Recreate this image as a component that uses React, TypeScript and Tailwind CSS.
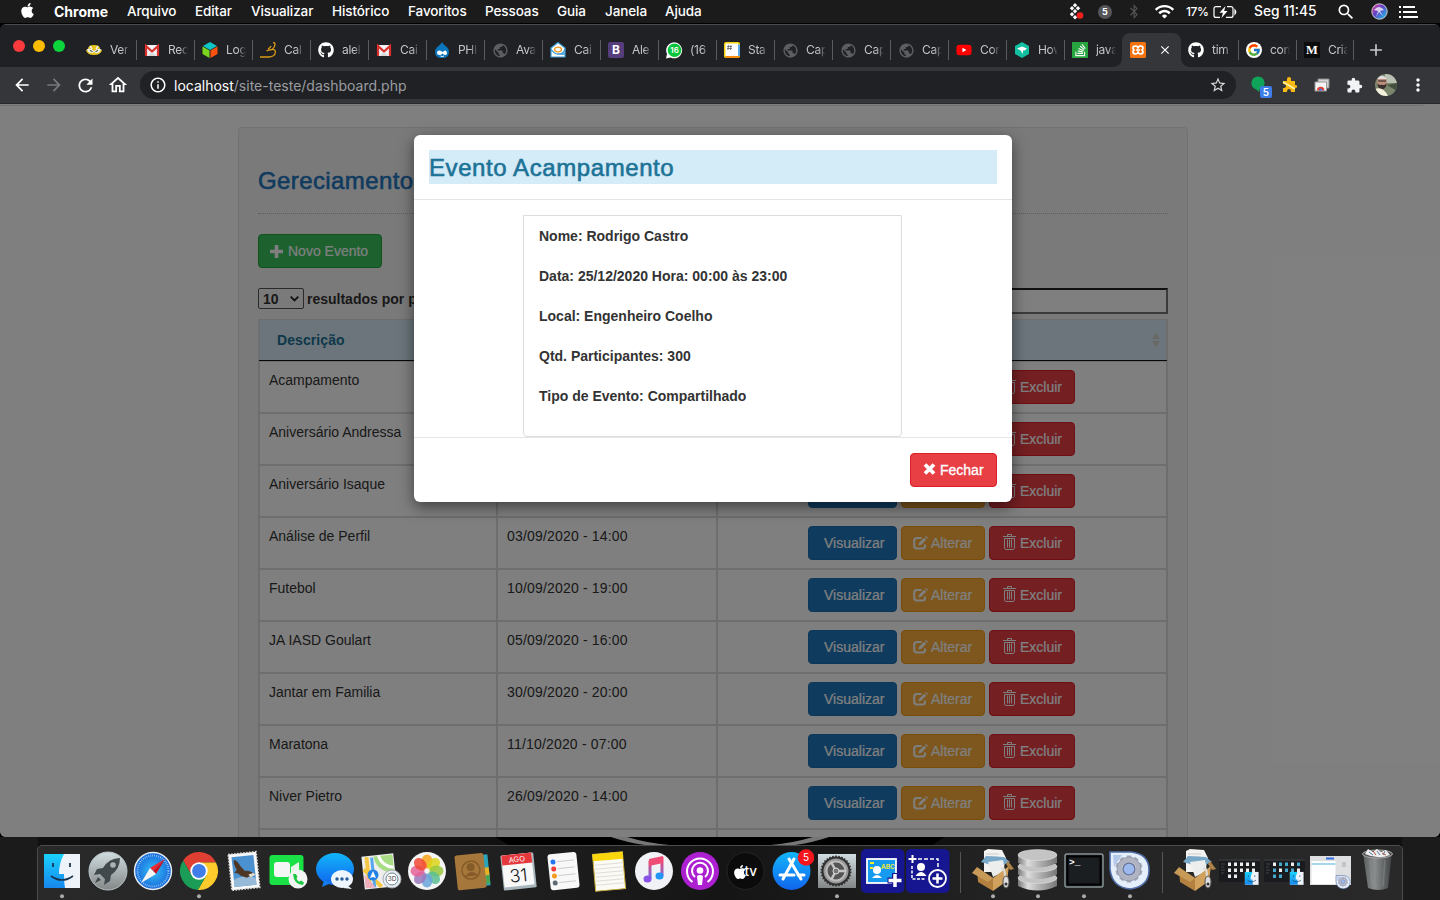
import React from "react";
import { FaApple, FaGithub, FaBluetoothB, FaYoutube, FaStackOverflow } from "react-icons/fa";
import { FcGoogle } from "react-icons/fc";
import {
  MdPublic, MdArrowBack, MdArrowForward, MdRefresh, MdOutlineHome, MdInfoOutline,
  MdStarBorder, MdExtension, MdMoreVert, MdWifi, MdAdd, MdClose, MdSearch,
} from "react-icons/md";

const ui = "font-['Inter',sans-serif]";

/* ---------- Menu bar ---------- */

const menus = [
  { label: "Arquivo", cls: "w-[68px]" },
  { label: "Editar", cls: "w-[56px]" },
  { label: "Visualizar", cls: "w-[81px]" },
  { label: "Histórico", cls: "w-[76px]" },
  { label: "Favoritos", cls: "w-[77px]" },
  { label: "Pessoas", cls: "w-[72px]" },
  { label: "Guia", cls: "w-[48px]" },
  { label: "Janela", cls: "w-[60px]" },
  { label: "Ajuda", cls: "w-[60px]" },
];

function MenuBar() {
  return (
    <div className={`flex h-[23px] shrink-0 items-center bg-[#1b1b1b] pl-5 text-[13.5px] font-medium text-white ${ui}`}>
      <FaApple className="mb-[2px] h-[17px] w-[15px]" />
      <span className="ml-[19px] w-[73px] text-[14px] font-bold">Chrome</span>
      {menus.map((m) => (
        <span key={m.label} className={`${m.cls} whitespace-nowrap tracking-[-0.1px]`}>{m.label}</span>
      ))}
      <div className="ml-auto flex items-center">
        <svg className="w-4" height="18" viewBox="0 0 16 18" fill="#fff">
          <path d="M6 0l2.200 2.200-2.200 2.200-2.200-2.200zM3 3l2.200 2.200L3 7.400.8 5.200zM9 3l2.200 2.200L9 7.400 6.800 5.200zM6 6l2.200 2.200L6 10.400 3.800 8.200zM3 9l2.200 2.200L3 13.400.8 11.200zM6 12l2.200 2.200L6 16.400 3.800 14.200z" />
          <circle cx="11" cy="12.5" r="3.3" fill="#f5201c" />
        </svg>
        <div className="ml-[13px] flex h-[14px] w-[14px] items-center justify-center rounded-full bg-[#55565a] text-[9px] font-bold">5</div>
        <FaBluetoothB className="ml-[15px] h-[15px] w-[14px] text-[#505050]" />
        <MdWifi className="ml-[13px] h-[21px] w-[21px]" />
        <span className="ml-[11px] w-[27px] whitespace-nowrap text-[12px] tracking-[-0.4px]">17%</span>
        <svg width="24" height="14" viewBox="0 0 24 14" fill="none" stroke="#fff" strokeWidth="1.2">
          <path d="M8 1.6H3a2 2 0 0 0-2 2v6.8a2 2 0 0 0 2 2h4M14 1.6h4a2 2 0 0 1 2 2v6.8a2 2 0 0 1-2 2h-5" />
          <path d="M12.500 1L6.500 7.800h3.400L8.500 13l6-7h-3.400z" fill="#fff" stroke="none" />
          <path d="M22 5q1.500 2 0 4z" fill="#fff" />
        </svg>
        <span className="ml-[17px] w-[64px] whitespace-nowrap text-[13.8px]">Seg 11:45</span>
        <MdSearch className="ml-[18px] h-[20px] w-[20px]" />
        <svg className="ml-[15px]" width="17" height="17" viewBox="0 0 17 17">
          <defs><linearGradient id="siri" x1="0" y1="0" x2="1" y2="1"><stop stopColor="#f43d98" /><stop offset=".45" stopColor="#5c45c9" /><stop offset="1" stopColor="#15d5ec" /></linearGradient></defs>
          <circle cx="8.500" cy="8.500" r="7.700" fill="url(#siri)" stroke="#ccc" strokeWidth="1" />
          <path d="M3 7q5-6 10 0l-4 1 3 5-4-4-3 5 2-6z" fill="#fff" opacity=".75" />
        </svg>
        <svg className="ml-[11px] mr-[22px]" width="19" height="12" viewBox="0 0 19 12" fill="#fff">
          <path d="M0 0h2v2H0zM4 0h12v2H4zM0 5h2v2H0zM4 5h14v2H4zM0 10h2v2H0zM4 10h15v2H4z" />
        </svg>
      </div>
    </div>
  );
}

/* ---------- Favicons ---------- */

const Globe = () => <MdPublic className="h-[17px] w-[17px] text-[#5b5e62]" />;
const Github = () => <FaGithub className="h-4 w-4 text-white" />;
const Gmail = () => (
  <svg width="16" height="16" viewBox="0 0 16 16">
    <path d="M1 3h14v11H1z" fill="#f1f1f1" />
    <path d="M2 14V4L8 9.500 14 4V14" fill="none" stroke="#d9302c" strokeWidth="2.200" />
    <path d="M4 14l4-4 4 4z" fill="#d8d8d8" />
  </svg>
);
const Mask = () => (
  <svg width="16" height="16" viewBox="0 0 16 16">
    <path d="M2 7q0-4 6-4t6 4l2 1q-1 5-8 5T0 8z" fill="#e8c51a" />
    <path d="M1 7q4-1 7 2 3-3 7-2-1 4-4 4-2 0-3-1-1 1-3 1-3 0-4-4z" fill="#e8edf2" />
    <path d="M4 4l2 3M12 4l-2 3" stroke="#e8edf2" strokeWidth="1.500" />
    <path d="M4 8.500l2.500 1M12 8.500l-2.500 1" stroke="#4a4220" />
  </svg>
);
const Cube = () => (
  <svg width="16" height="16" viewBox="0 0 16 16">
    <path d="M8 0l7 4-7 4-7-4z" fill="#0fc6c7" /><path d="M0.500 4.500L7.500 8.500v7.500l-7-4z" fill="#7ad41f" /><path d="M15.500 4.500l-7 4V16l7-4z" fill="#fb5110" />
  </svg>
);
const Thumb = () => (
  <svg width="16" height="16" viewBox="0 0 16 16" fill="none" stroke="#d99a14" strokeWidth="1.300">
    <path d="M0 15h9q6-.5 6.300-4.500Q15.600 7 12 7.500 8 8 6.500 9M12 7.500Q15 5 15 2.500 15 .5 13 .5M8 7q2-1 3-3" />
  </svg>
);
const Drop = () => (
  <svg width="16" height="16" viewBox="0 0 16 16">
    <path d="M8 0q1 2.500 4 4.500 3 2 3 5.500 0 6-7 6t-7-6q0-3.500 3-5.500Q7 2.500 8 0z" fill="#0b76bb" />
    <path d="M3 11q0-2.500 2.500-2.500Q7 8.500 8.500 10 10 8.500 11.500 8.500 13 9 13 11t-1.500 2q-1.500 0-3-1.500Q7 13 5.500 13 3 13 3 11z" fill="#fff" /><path d="M6.500 14q2 1.200 3.500 0" stroke="#fff" fill="none" />
  </svg>
);
const Mail = () => (
  <svg width="16" height="16" viewBox="0 0 16 16">
    <path d="M1 6l7-5.500L15 6v9H1z" fill="#fff" stroke="#3a9ad4" strokeWidth="1.200" />
    <path d="M1 7q3 5 7 5h7M15 7q-1 4-5 5" fill="none" stroke="#3a9ad4" strokeWidth="1.300" />
    <ellipse cx="8" cy="7.500" rx="3.500" ry="2.300" fill="none" stroke="#f09a25" strokeWidth="1.300" />
  </svg>
);
const Boot = () => <div className="flex h-4 w-4 items-center justify-center rounded-[2px] bg-[#563d7c] text-[12px] font-bold text-white">B</div>;
const Whats = () => (
  <svg width="17" height="17" viewBox="0 0 17 17">
    <path d="M0 16.500l1-4.500a8 8 0 1 1 3.500 3.500z" fill="#fff" /><circle cx="8.500" cy="8.200" r="6.800" fill="#08c53c" />
    <text x="8.500" y="11.200" fontSize="8" fontWeight="600" textAnchor="middle" fill="#fff">16</text>
  </svg>
);
const Hash = () => (
  <svg width="16" height="16" viewBox="0 0 16 16">
    <rect width="16" height="16" rx="2" fill="#f7d50c" /><path d="M14 2v12h2V3z" fill="#58a9e8" /><path d="M1 14h14v2H2z" fill="#f78d0c" /><rect x="1.500" y="1.500" width="12.500" height="12.500" fill="#fff" />
    <path d="M4.500 3L4 8M7 3l-.5 5M3 4.500h5M3 6.500h5" stroke="#555" strokeWidth=".7" />
  </svg>
);
const Youtube = () => <FaYoutube className="h-4 w-4 text-[#f00] [background:linear-gradient(#fff,#fff)_center/6px_6px_no-repeat]" />;
const Hex = () => (
  <svg width="16" height="16" viewBox="0 0 16 16">
    <path d="M8 0l7 4v8l-7 4-7-4V4z" fill="#12bfa0" /><path d="M3 6.500L8 4.500l5 2-2.500 2H9V12L6.500 8.500z" fill="#fff" />
  </svg>
);
const Stack = () => <div className="flex h-4 w-4 items-center justify-center bg-[#27a53f]"><FaStackOverflow className="h-[14px] w-[13px] text-white" /></div>;
const Xampp = () => (
  <svg width="16" height="16" viewBox="0 0 16 16">
    <rect width="16" height="16" rx="1.500" fill="#f5730e" />
    <path d="M5 4.200h1.200q1 0 1.800 1.800.8-1.800 1.800-1.800H11q2 0 2 2 0 1-1 1.800 1 .8 1 1.800 0 2-2 2H9.800Q8.800 11.800 8 10q-.8 1.800-1.800 1.800H5q-2 0-2-2Q3 8.800 4 8q-1-.8-1-1.800 0-2 2-2z" fill="none" stroke="#fff" strokeWidth="1.700" />
    <path d="M6 8h4" stroke="#fff" strokeWidth="1.500" />
  </svg>
);
const Google = () => <div className="flex h-4 w-4 items-center justify-center rounded-full bg-white"><FcGoogle className="h-[14px] w-[14px]" /></div>;
const Medium = () => <div className="flex h-4 w-4 items-center justify-center bg-[#0b0b0b] font-['Liberation_Serif',serif] text-[12.5px] font-bold text-white">M</div>;

const tabs: { t: string; I: React.FC }[] = [
  { t: "Ver", I: Mask }, { t: "Rec", I: Gmail }, { t: "Log", I: Cube }, { t: "Cal", I: Thumb },
  { t: "alel", I: Github }, { t: "Cai", I: Gmail }, { t: "PHI", I: Drop }, { t: "Ava", I: Globe },
  { t: "Cai", I: Mail }, { t: "Ale", I: Boot }, { t: "(16", I: Whats }, { t: "Sta", I: Hash },
  { t: "Cap", I: Globe }, { t: "Cap", I: Globe }, { t: "Cap", I: Globe }, { t: "Con", I: Youtube },
  { t: "How", I: Hex }, { t: "java", I: Stack }, { t: "", I: Xampp }, { t: "tim", I: Github },
  { t: "con", I: Google }, { t: "Cria", I: Medium },
];

function TabStrip() {
  return (
    <div className={`flex h-[42px] shrink-0 items-end bg-[#202124] text-[12px] text-[#c2c5c9] ${ui}`}>
      <div className="flex h-[42px] w-[78px] shrink-0 items-center gap-2 pl-[13px]">
        <span className="h-3 w-3 rounded-full bg-[#fb3a3e]" />
        <span className="h-3 w-3 rounded-full bg-[#fcbc02]" />
        <span className="h-3 w-3 rounded-full bg-[#0bd53b]" />
      </div>
      {tabs.map(({ t, I }, i) =>
        i === 18 ? (
          <div key={i} className="-ml-[14px] flex h-[34px] w-[86px] shrink-0 items-end">
            <span className="ml-[6px] h-2 w-2 bg-[radial-gradient(circle_at_0_0,transparent_7.5px,#35363a_8px)]" />
            <div className="flex h-[34px] w-[59px] items-center rounded-t-[8px] bg-[#35363a] pl-2">
              <I />
              <MdClose className="ml-[12px] h-[14px] w-[14px] text-white" />
            </div>
            <span className="h-2 w-2 bg-[radial-gradient(circle_at_100%_0,transparent_7.5px,#35363a_8px)]" />
          </div>
        ) : (
          <div key={i} className={`flex h-[34px] w-[58px] shrink-0 items-center pl-2 ${i === 19 ? "-ml-[14px]" : ""}`}>
            <span className="w-[17px] shrink-0"><I /></span>
            <span className="ml-[7px] w-[20px] shrink-0 overflow-hidden whitespace-nowrap tracking-[-0.3px] [mask-image:linear-gradient(90deg,#000_60%,transparent_100%)]">{t}</span>
            {i !== 17 && <span className={`h-5 w-px shrink-0 bg-[#5a5b5f] ${i === 21 ? "ml-[5px]" : "ml-[6px]"}`} />}
          </div>
        )
      )}
      <div className="flex h-[34px] items-center"><MdAdd className="ml-[12px] h-[20px] w-[20px] text-[#c5c7ca]" /></div>
    </div>
  );
}

function Toolbar() {
  return (
    <div className="flex h-[37px] shrink-0 items-center border-b border-[#28292c] bg-[#35363a] pl-3 text-white">
      <MdArrowBack className="h-5 w-5" />
      <MdArrowForward className="ml-3 h-5 w-5 text-[#77787b]" />
      <MdRefresh className="ml-[11px] h-[21px] w-[21px]" />
      <MdOutlineHome className="ml-[11px] h-[22px] w-[22px]" />
      <div className={`ml-[11px] flex h-7 w-[1096px] items-center rounded-full bg-[#202124] pl-[9px] text-[14px] ${ui}`}>
        <MdInfoOutline className="h-[18px] w-[18px]" />
        <span className="ml-[7px] tracking-[0px] text-[#9a9da1]"><span className="text-white">localhost</span>/site-teste/dashboard.php</span>
        <MdStarBorder className="ml-auto mr-[9px] h-[18px] w-[18px] text-[#d8d8d8]" />
      </div>
      <svg className="ml-[14px] mt-[5px]" width="23" height="24" viewBox="0 0 23 24">
        <circle cx="8" cy="7" r="6.600" fill="#10a35a" /><path d="M5 12h5l-1 4z" fill="#10a35a" />
        <rect x="10" y="10" width="12" height="12" rx="2" fill="#3c7de8" />
        <text x="16" y="19.500" fontSize="10" fontWeight="600" fill="#fff" textAnchor="middle" fontFamily="Inter">5</text>
      </svg>
      <svg className="ml-[9px]" width="16" height="16" viewBox="0 0 16 16">
        <path d="M1 4h4V2q0-2 2-2t2 2v2h4v4l2 .5v2l-2 .5v4H9q0-3-2-3t-2 3H1v-4q3 0 3-2T1 7z" fill="#f9b912" /><path d="M1 5l12 7" stroke="#fff0a0" strokeWidth="1.500" />
      </svg>
      <svg className="ml-[16px]" width="16" height="15" viewBox="0 0 16 15">
        <path d="M4 1h11v9H4z" fill="#d2d2d2" stroke="#8a8a8a" /><path d="M1 4h11.500v9H1z" fill="#f3f3f3" stroke="#999" />
        <path d="M3 12.500a3.700 3.700 0 0 1 7.400 0z" fill="#e33b2e" /><path d="M4.800 12.500a2 2 0 0 1 4 0z" fill="#3c7de8" />
      </svg>
      <MdExtension className="ml-[16px] h-[17px] w-[17px] text-[#f1f3f4]" />
      <svg className="ml-[12px]" width="22" height="22" viewBox="0 0 22 22">
        <clipPath id="av"><circle cx="11" cy="11" r="11" /></clipPath>
        <g clipPath="url(#av)"><rect width="22" height="22" fill="#79866c" /><path d="M10 0h12v9H10z" fill="#b9c1b2" /><path d="M12 11l10-2v8z" fill="#44503e" /><circle cx="7" cy="8" r="5" fill="#bf8e7c" /><path d="M2 5Q7-2 12 5z" fill="#ddd" /><path d="M2.500 9q1.500 3 4.500 1.500Q10 12 11.500 9q0 6-4.500 6t-4.500-6z" fill="#3b302d" /><path d="M3 7h8" stroke="#222" strokeWidth="1" /><path d="M0 15q8-3 13 7H0z" fill="#f3f0dd" /></g>
      </svg>
      <MdMoreVert className="ml-[11px] h-5 w-5" />
    </div>
  );
}

/* ---------- Page ---------- */

const rows = [
  ["Acampamento", "25/12/2020 - 00:00"],
  ["Aniversário Andressa", "12/09/2020 - 19:00"],
  ["Aniversário Isaque", "15/09/2020 - 19:00"],
  ["Análise de Perfil", "03/09/2020 - 14:00"],
  ["Futebol", "10/09/2020 - 19:00"],
  ["JA IASD Goulart", "05/09/2020 - 16:00"],
  ["Jantar em Familia", "30/09/2020 - 20:00"],
  ["Maratona", "11/10/2020 - 07:00"],
  ["Niver Pietro", "26/09/2020 - 14:00"],
  ["", ""],
];

const btn = "flex h-[34px] items-center rounded-[4px] border text-[14px] text-white whitespace-nowrap [-webkit-text-stroke:0.2px_#fff]";

const EditIcon = () => (
  <svg width="15" height="14" viewBox="0 0 15 14" fill="none" stroke="#fff">
    <path d="M8.500 2H4Q1.200 2 1.200 4.500v5.200Q1.200 12.500 4 12.500h5.500q2.500 0 2.500-2.500V8.500" strokeWidth="2" />
    <path d="M5.500 9.500l.6-2.800 5-5 2.100 2.100-5 5z" fill="#fff" stroke="none" /><path d="M12 .8l1 -.8 2 2-.9.9z" fill="#fff" stroke="none" />
  </svg>
);
const TrashIcon = () => (
  <svg className="mb-[3px]" width="13" height="16" viewBox="0 0 13 16" fill="none" stroke="#fff">
    <path d="M0 2.500h13M4.500 2V.500h4V2" strokeWidth="1" /><path d="M1.500 4.500h10V14l-1 1.500h-8l-1-1.500z" /><path d="M4.500 5.500v8M6.500 5.500v8M8.500 5.500v8" />
  </svg>
);

function Dashboard() {
  return (
    <div className="flex h-full w-full flex-col items-center overflow-hidden bg-white">
      <div className="mr-4 h-[2px] w-[1424px] shrink-0 self-start rounded-br border-b border-r border-[#e3e3e3] bg-[#fafafa]" />
      <div className="mr-[14px] mt-[21px] h-[900px] w-[950px] shrink-0 rounded border border-[#e3e3e3] bg-[#f5f5f5] px-[19px]">
        <h3 className="mt-[40px] text-[24px] leading-[26px] tracking-[0.4px] text-[#1f76bf] [-webkit-text-stroke:0.6px_#1f76bf]">Gereciamento</h3>
        <hr className="mt-[19px] border-0 border-t border-dotted border-[#bbb]" />
        <button className={`${btn} mt-5 w-[124px] border-[#20a63c] bg-[#3ac25d] pl-[11px]`}>
          <svg width="13" height="13" viewBox="0 0 13 13" fill="#fff"><path d="M4.700 0h3.600v4.700H13v3.600H8.300V13H4.700V8.300H0V4.700h4.700z" /></svg>
          <span className="ml-[5px]">Novo Evento</span>
        </button>
        <div className="mt-5 flex h-[31px] items-start justify-between text-[14px] font-bold text-[#333]">
          <div className="flex items-start">
            <div className="flex h-[21px] w-[46px] items-center justify-between rounded-[2px] border border-[#555] pl-1 pr-1">
              <span className="mt-px">10</span>
              <svg width="9" height="6" viewBox="0 0 9 6" fill="none" stroke="#222" strokeWidth="1.800"><path d="M.7.700l3.800 3.800L8.300.7" /></svg>
            </div>
            <span className="ml-[3px] mt-px leading-[21px]">resultados por página</span>
          </div>
          <div className="h-[26px] w-[200px] border-2 border-b-[#777] border-l-[#222] border-r-[#777] border-t-[#222] bg-white" />
        </div>
        <div className="w-[910px] border border-[#ddd] text-[14px] text-[#333]">
          <div className="flex h-[41px] border-b border-[#111] bg-[#d6ebf7] font-bold text-[#1c7094]">
            <div className="flex w-[238px] items-center border-l border-[#ddd] pl-[17px] tracking-[0.08px]">Descrição</div>
            <div className="w-[220px]" />
            <div className="flex w-[450px] items-center justify-end border-r border-[#ddd] pr-[6px]">
              <svg width="8" height="14" viewBox="0 0 8 14" fill="#d3d0cb"><path d="M4 0l4 6H0zM0 8h8l-4 6z" /></svg>
            </div>
          </div>
          {rows.map(([name, date], i) => (
            <div key={i} className="flex h-[52px] bg-white leading-5">
              <div className="w-[238px] border border-[#ddd] px-[9px] py-2">{name}</div>
              <div className="w-[220px] border border-[#ddd] px-[9px] py-2 tracking-[0.18px]">{date}</div>
              <div className="flex w-[450px] items-start justify-center gap-1 border border-[#ddd] py-2 pr-[2px]">
                <button className={`${btn} w-[89px] border-[#1f70b0] bg-[#1f78bd] pl-[15.5px]`}>Visualizar</button>
                <button className={`${btn} w-[84px] border-[#f59a12] bg-[#fbae3c] pl-[11px]`}><EditIcon /><span className="ml-[3.5px]">Alterar</span></button>
                <button className={`${btn} w-[86px] border-[#dc1e28] bg-[#e83f44] pl-[13px]`}><TrashIcon /><span className="ml-[4.5px]">Excluir</span></button>
              </div>
            </div>
          ))}
        </div>
      </div>
    </div>
  );
}

const details = [
  "Nome: Rodrigo Castro",
  "Data: 25/12/2020 Hora: 00:00 às 23:00",
  "Local: Engenheiro Coelho",
  "Qtd. Participantes: 300",
  "Tipo de Evento: Compartilhado",
];

function EventModal() {
  return (
    <div className="absolute inset-0 flex items-start justify-center bg-black/50 pr-[14px] pt-[31px]">
      <div className="flex h-[367px] w-[598px] flex-col rounded-[6px] bg-white shadow-[0_5px_15px_rgba(0,0,0,0.5)]">
        <div className="border-b border-[#e5e5e5] p-[15px]">
          <h3 className="h-[34px] bg-[#d4ebf8] text-[24px] leading-[35px] tracking-[0.58px] text-[#1d7397] [-webkit-text-stroke:0.6px_#1d7397]">Evento Acampamento</h3>
        </div>
        <div className="flex h-[237px] shrink-0 justify-center pr-[2px] pt-[15px]">
          <div className="h-[222px] w-[379px] rounded-b-[4px] border border-[#ddd] px-[15.5px] pt-[10px] text-[14px] font-bold text-[#333]">
            {details.map((d) => <p key={d} className="mb-5 leading-5">{d}</p>)}
          </div>
        </div>
        <div className="flex justify-end border-t border-[#e5e5e5] p-[15px]">
          <button className={`${btn} w-[87px] border-[#dc1e28] bg-[#e83f44] pl-[12px]`}>
            <svg className="mb-[2px]" width="13" height="12" viewBox="0 0 13 12"><path d="M2 1.500l9 9M11 1.500l-9 9" stroke="#fff" strokeWidth="3.800" /></svg>
            <span className="ml-[4px] [-webkit-text-stroke:0.3px_#fff]">Fechar</span>
          </button>
        </div>
      </div>
    </div>
  );
}

/* ---------- Dock ---------- */

const FinderFace = () => (
  <g>
    <rect x="5" y="9" width="36" height="34" fill="#eef3fa" />
    <path d="M5 9h20q-5 9-5 20h5q0 8 1 14H5z" fill="url(#fin)" />
    <path d="M14 18v4M31 18v4" stroke="#17344e" strokeWidth="1.800" /><path d="M12 31q11 8 22 0" fill="none" stroke="#17344e" strokeWidth="1.600" />
  </g>
);
const gearTeeth = (n: number, r: number, c: string, w: number, l: number) =>
  Array.from({ length: n }, (_, i) => (
    <rect key={i} x={-w / 2} y={-r - l} width={w} height={l + 1} fill={c} transform={`rotate(${(360 / n) * i})`} />
  ));
const Box = () => (
  <g>
    <path d="M14 6l4-2 14 1 4 8-3 14H14z" fill="#f3f3f1" /><path d="M16 9h13M16 12h12" stroke="#ccc" />
    <path d="M11 17l5-6 18 1 6 5-12 5z" fill="#78a9c8" /><path d="M18 17l15-2 2 11-12 6z" fill="#eceeee" />
    <path d="M7 23l16 10v13L8 37z" fill="#b3803f" /><path d="M23 33l16-12-2 15-14 10z" fill="#d1a25e" />
    <path d="M7 22l-5 6 16 9 5-4z" fill="#c79a58" /><path d="M38 16l6 8-4 1-4-6z" fill="#ad8348" />
    <path d="M31 24q4-2 4 7" fill="none" stroke="#ddd" strokeWidth="2" /><ellipse cx="36" cy="37" rx="3" ry="6" fill="#ddd" stroke="#555" /><circle cx="36" cy="39" r="1.500" fill="#333" />
  </g>
);
const GearBadge = () => (
  <g>
    <path d="M3 7h21q18 2 18 18t-18 19Q5 43 3 24z" fill="#e5eefb" stroke="#506da6" strokeWidth="1.600" />
    <path d="M6 10h9L7 22z" fill="#b3c7ea" />
    <g transform="translate(22 24)">{gearTeeth(10, 11, "#a6abb9", 4.500, 2.5)}<circle r="9.500" fill="none" stroke="#b0b4c2" strokeWidth="5" /><circle r="12" fill="none" stroke="#777f96" strokeWidth=".5" /><circle r="6" fill="#9dbaf0" stroke="#6c7697" strokeWidth="1.500" /></g>
  </g>
);
const MiniFinder = () => <g transform="translate(25 23.500) scale(.38)"><FinderFace /></g>;
const Thumbs = ({ blue }: { blue?: boolean }) => (
  <g>
    <rect x="1" y="14" width="41" height="23" fill="#191b1e" /><path d="M1 14h41v2H1z" fill="#303235" /><path d="M3 19h4M3 22h3M3 25h4M3 28h3" stroke="#444" />
    {Array.from({ length: 12 }, (_, i) => (
      <rect key={i} x={10 + (i % 5) * 6} y={17.5 + Math.floor(i / 5) * 6} width="3" height="3.500" fill={blue && i % 3 !== 0 ? "#45a9ce" : "#eee"} />
    ))}
    <MiniFinder />
  </g>
);

const leftIcons: React.ReactNode[] = [
  <FinderFace />,
  <g><circle cx="23" cy="26" r="19" fill="url(#gray)" stroke="#b6c3c7" /><path d="M35 13q-11 0-17 10l-6 1-3 6 6-1 5 5-1 6 6-4 1-6q9-6 9-17z" fill="#41494d" /><circle cx="28" cy="20" r="2.800" fill="#aab3b6" /><path d="M13 32l-3 6 6-3z" fill="#41494d" /></g>,
  <g><circle cx="23" cy="26" r="18.500" fill="url(#saf)" stroke="#e4eaf0" strokeWidth="1.500" /><circle cx="23" cy="26" r="15.500" fill="none" stroke="#bfe2ff" strokeWidth="2" strokeDasharray=".6 1.400" /><path d="M35 14L20 23l3 3z" fill="#f4272e" /><path d="M35 14L26 29l-3-3z" fill="#c91420" /><path d="M11 38l9-15 6 6z" fill="#f5f5f5" /></g>,
  <g transform="translate(23 26)"><path d="M0 0V-8.500H17A19 19 0 0 0-15.860-10.460L-7.360 4.250Z" fill="#df3f32" /><path d="M0 0V-8.500H17A19 19 0 0 0-15.860-10.460L-7.360 4.250Z" fill="#fdcc2c" transform="rotate(120)" /><path d="M0 0V-8.500H17A19 19 0 0 0-15.860-10.460L-7.360 4.250Z" fill="#1b9d58" transform="rotate(240)" /><circle r="8.700" fill="#fff" /><circle r="6.900" fill="#3f7de8" /></g>,
  <g transform="rotate(-6 23 26)"><rect x="9" y="8" width="28" height="36" fill="#f8f8f8" stroke="#ddd" strokeDasharray="1.500 1.500" strokeWidth="1.600" /><rect x="12" y="11" width="22" height="30" fill="#4c91cf" /><path d="M12 34q11-5 22 0v7H12z" fill="#96bad8" /><path d="M14 14q3 0 6 7l4 5q6 0 9 5-5 0-8 2l-6-3q-2-3-6-3l3-3q-3-5-2-10z" fill="#4f3726" /><path d="M27 30l5-1 2 2-5 2z" fill="#e9dfd1" /></g>,
  <g><rect x="2.500" y="10" width="34" height="30" rx="3" fill="#1ae145" /><rect x="7" y="17" width="16" height="15" rx="3" fill="#f5f5f5" /><path d="M24 22l8-5v15l-8-4z" fill="#e7f5e8" /><circle cx="31" cy="34" r="9.500" fill="#f4f6f5" /><path d="M26 29l3 0 1.500 3-1 1.500q1 2.500 3 3l1.500-1 3 2-1 2.500q-9 0-10-11z" fill="#1dc844" /></g>,
  <g><ellipse cx="22" cy="24" rx="19" ry="16" fill="url(#blue)" /><path d="M11 35l-2 7 9-4z" fill="#147cf0" /><ellipse cx="29" cy="34" rx="11" ry="9" fill="#eef5fc" /><path d="M34 40l5 4-9-1z" fill="#eef5fc" /><g fill="#245b9b"><circle cx="24" cy="34" r="1.700" /><circle cx="29" cy="34" r="1.700" /><circle cx="34" cy="34" r="1.700" /></g></g>,
  <g><g transform="rotate(-6 20 26)"><rect x="5" y="10" width="32" height="33" fill="#eee" /><path d="M17 11q1 15 19 19V11z" fill="#a8dd86" /><path d="M22 11q3 11 14 13" fill="none" stroke="#fff" strokeWidth="3" /><path d="M10 11v31M6 23l16 19" stroke="#f5c843" strokeWidth="4" /><path d="M15 12v30" stroke="#55a7ef" strokeWidth="3" /><path d="M6 28l10 14H6z" fill="#f0aebd" /></g><circle cx="15" cy="30" r="5.500" fill="#2382e7" /><path d="M15 26l3 7-3-1-3 1z" fill="#fff" /><circle cx="34" cy="34" r="9" fill="#e7edf1" stroke="#a5adb3" /><circle cx="34" cy="34" r="6" fill="#fff" stroke="#6c8290" /><text x="34" y="36.500" fontSize="6.500" textAnchor="middle" fill="#444">3D</text></g>,
  <g transform="translate(23 26)"><circle r="19" fill="#f5f5f5" />{["#f9a51a", "#dbd51b", "#9ac83c", "#5cbf93", "#6aa5dc", "#9b78bd", "#e56397", "#f14a37"].map((c, i) => <ellipse key={c} cy="-9.500" rx="5.500" ry="7" fill={c} opacity=".86" transform={`rotate(${i * 45})`} />)}</g>,
  <g transform="rotate(-6 23 26)"><rect x="31" y="11" width="9" height="31" fill="#2aa4b8" /><path d="M32 24h8v8h-8z" fill="#e6b326" /><path d="M32 32h8v8h-8z" fill="#4ba653" /><rect x="7" y="9" width="29" height="35" rx="2" fill="#a6773b" /><circle cx="22" cy="25" r="9" fill="none" stroke="#855b29" strokeWidth="1.500" /><circle cx="22" cy="22" r="4" fill="#855b29" /><path d="M15 31q7-8 14 0" fill="#855b29" /></g>,
  <g transform="rotate(-6 23 26)"><rect x="7" y="9" width="33" height="35" rx="1" fill="#a9b7bd" /><rect x="8" y="9" width="30" height="32" fill="#f8f8f8" /><rect x="8" y="9" width="30" height="10" fill="#e5383c" /><text x="23" y="17" fontSize="7.500" fill="#fff" textAnchor="middle">AGO</text><text x="23" y="37" fontSize="18" fontWeight="300" fill="#222" textAnchor="middle">31</text></g>,
  <g transform="rotate(-6 23 26)"><rect x="8" y="8" width="29" height="36" rx="3" fill="#f8f8f8" /><path d="M17 16h17M17 23h17M17 30h17M17 37h17" stroke="#bbb" strokeWidth=".7" /><circle cx="13" cy="16" r="2.500" fill="#2678f2" /><circle cx="13" cy="23" r="2.500" fill="#f33d3b" /><circle cx="13" cy="30" r="2.500" fill="#f69b20" /><circle cx="13" cy="37" r="2.500" fill="#606873" /></g>,
  <g transform="rotate(-5 23 26)"><rect x="8" y="8" width="30" height="37" fill="#fbfaf3" stroke="#ceb13a" /><rect x="8" y="8" width="30" height="7" fill="#fbd60c" /><path d="M9 19h28M9 23h28M9 27h28M9 31h28M9 35h28M9 39h28" stroke="#ddd" /></g>,
  <g><circle cx="22" cy="26" r="19" fill="#f0f2f6" /><path d="M18 34V17l12-3v17" fill="none" stroke="url(#music)" strokeWidth="3" /><path d="M17 14l14-3v7l-14 3z" fill="#ef4d75" /><ellipse cx="15.500" cy="34" rx="4" ry="3.500" fill="#8953e9" /><ellipse cx="27.500" cy="31" rx="4" ry="3.500" fill="#2395f4" /></g>,
  <g><circle cx="23" cy="26" r="19" fill="#ac20d2" /><g fill="none" stroke="#fff" strokeWidth="2"><path d="M15.500 37a13 13 0 1 1 15 0M18 32a8 8 0 1 1 10 0" /></g><circle cx="23" cy="25.500" r="3.300" fill="#fff" /><path d="M20 31q3-2 6 0l-1 9h-4z" fill="#fff" /></g>,
  <g><circle cx="22.500" cy="26" r="18.500" fill="#0b0b0b" stroke="#252525" /><FaApple x="9" y="19" width="11" height="13" color="#fff" /><text x="21.500" y="31" fontSize="13.500" fontWeight="500" fill="#fff">tv</text></g>,
  <g><circle cx="22.500" cy="26" r="19" fill="url(#blue)" /><path d="M25 14L14 34M20 14l12 20M11 30h14M29 30h6" fill="none" stroke="#fff" strokeWidth="3" strokeLinecap="round" /><circle cx="37" cy="12.500" r="8.300" fill="#f5151c" /><text x="37" y="16" fontSize="10" fill="#fff" textAnchor="middle">5</text></g>,
  <g><rect x="4" y="9" width="38" height="34" fill="url(#gray)" /><g transform="translate(22 26)">{gearTeeth(30, 13.5, "#2f2f2f", 1.5, 2)}<circle r="13.500" fill="#999" stroke="#303030" strokeWidth="2" /><circle r="9.500" fill="#555" stroke="#bbb" strokeWidth="2" /><path d="M0 0h10M0 0l-5-9M0 0l-5 9" stroke="#c5c5c5" strokeWidth="2.500" /><circle r="3" fill="#777" stroke="#ddd" /></g></g>,
  <g><rect x="1" y="4" width="43.500" height="44" rx="5" fill="#161690" /><rect x="7" y="14" width="29" height="24" fill="#159af0" stroke="#fff" strokeWidth="1.800" /><circle cx="17" cy="25" r="4" fill="#fff" /><path d="M12 33q5-6 10 0z" fill="#fff" /><text x="21" y="24" fontSize="6.500" fontWeight="600" fill="#f7eb30">ABC</text><path d="M10 18h4M10 23h3" stroke="#f7eb30" strokeWidth="2" /><path d="M35 28v15M27.500 35.500h15" stroke="#161690" strokeWidth="6" /><path d="M35 29v13M28.500 35.500h13" stroke="#fff" strokeWidth="3.500" /></g>,
  <g><rect x="1" y="4" width="43.500" height="44" rx="5" fill="#161690" /><path d="M13 14h20v12" fill="none" stroke="#fff" strokeWidth="1.500" strokeDasharray="4 2" /><path d="M7 21v13h14" fill="none" stroke="#fff" strokeWidth="1.500" strokeDasharray="3 1.500" /><path d="M7.500 10v8M3.500 14h8" stroke="#fff" strokeWidth="2" /><circle cx="16" cy="22" r="4" fill="#fff" /><path d="M10.500 31q5.500-8 11 0z" fill="#fff" /><circle cx="32.500" cy="33.500" r="8.500" fill="#161690" stroke="#fff" strokeWidth="1.800" /><path d="M32.500 28.500v10M27.500 33.500h10" stroke="#fff" strokeWidth="2.500" /></g>,
];

const midIcons: React.ReactNode[] = [
  <Box />,
  <g>{[0, 1, 2].map((i) => { const y = 36 - i * 11.5; return <g key={i}><path d={`M3 ${y - 3}v8q19.500 9 39 0v-8z`} fill="url(#metal)" /><ellipse cx="22.500" cy={y - 3} rx="19.500" ry="5.500" fill="#c4c4c4" stroke="#e6e6e6" strokeWidth=".5" /></g>; })}</g>,
  <g><rect x="4" y="9" width="38" height="33" rx="2" fill="#1b1e20" stroke="#879394" strokeWidth="1.500" /><rect x="6.500" y="11.500" width="33" height="28" fill="none" stroke="#000" strokeWidth="2" /><text x="8" y="20" fontSize="9.500" fontWeight="700" fill="#fff" fontFamily="Liberation Mono">&gt;_</text></g>,
  <GearBadge />,
];

const rightIcons: React.ReactNode[] = [
  <Box />,
  <Thumbs />,
  <Thumbs blue />,
  <g><rect x="1" y="11" width="41" height="29" fill="#dedfe1" /><rect x="2.500" y="16" width="24" height="23" fill="#fff" /><path d="M17 13.500h8" stroke="#346de2" strokeWidth="2" /><path d="M2.500 19h24" stroke="#a5d6ef" strokeWidth="2" /><path d="M33 17h4v5h-4z" fill="#c5c5c5" /><g transform="translate(26 28) scale(.36)"><GearBadge /></g></g>,
  <g><path d="M8 8l29-1-4 36q-10 4-20 0z" fill="url(#bin)" /><ellipse cx="22.500" cy="9" rx="15" ry="4" fill="#555" stroke="#aaa" /><path d="M10 9l3-5 5 3 4-3 4 3 5-2 4 5q-12 5-25-1z" fill="#eee" /><path d="M14 7l4 3M22 6l3 4M30 6l-2 4" stroke="#547ba8" /><path d="M18 6l3 4M27 8l4 2" stroke="#b84b38" /><path d="M15 15l2 26M30 15l-2 26" stroke="#929696" strokeWidth="1.500" opacity=".4" /></g>,
];

function DockIcon({ icon, dot }: { icon: React.ReactNode; dot?: boolean }) {
  return (
    <svg className="h-[55px] w-[45.6px] shrink-0" viewBox="0 0 45.6 55" fontFamily="Inter">
      {icon}
      {dot && <circle cx="23" cy="51.200" r="2" fill="#aaa" />}
    </svg>
  );
}

function Dock() {
  return (
    <div className="relative flex h-[63px] shrink-0 justify-center bg-black">
      <svg className="absolute inset-0" width="1440" height="63" viewBox="0 0 1440 63">
        <defs>
          <linearGradient id="fin" x2="0" y2="1"><stop stopColor="#19d2fd" /><stop offset="1" stopColor="#1787ed" /></linearGradient>
          <linearGradient id="gray" x2="0" y2="1"><stop stopColor="#d0dde1" /><stop offset="1" stopColor="#848787" /></linearGradient>
          <linearGradient id="blue" x2="0" y2="1"><stop stopColor="#12b6fa" /><stop offset="1" stopColor="#1165ee" /></linearGradient>
          <radialGradient id="saf"><stop stopColor="#35bff5" /><stop offset="1" stopColor="#1769db" /></radialGradient>
          <linearGradient id="music" x2="0" y2="1"><stop stopColor="#f54868" /><stop offset="1" stopColor="#706be9" /></linearGradient>
          <linearGradient id="metal"><stop stopColor="#777" /><stop offset=".25" stopColor="#ddd" /><stop offset=".6" stopColor="#aaa" /><stop offset="1" stopColor="#777" /></linearGradient>
          <linearGradient id="bin"><stop stopColor="#5b5e5e" /><stop offset=".4" stopColor="#8b8e8e" /><stop offset="1" stopColor="#3f4242" /></linearGradient>
        </defs>
        <path d="M0 0h496l12 8H0zM944 0h496v8H933z" fill="#111" />
        <path d="M0 0h38v63H0zM1402 0h38v63h-38z" fill="#1b1b1b" />
        <path d="M611 0h16q20 6 42 8h-24q-20-3-34-8zM829 0h-16q-20 6-42 8h24q20-3 34-8z" fill="#777" />
      </svg>
      <div className="relative mt-[8px] flex h-[55px] w-[1366px] overflow-hidden rounded-t-[5px] border border-b-0 border-[#4c4c4c] bg-[linear-gradient(90deg,#292929,#222_30%,#151515_50%,#222_70%,#292929)] pl-[1px]">
        <div className="-mt-px flex">
          {leftIcons.map((ic, i) => <DockIcon key={i} icon={ic} dot={i === 0 || i === 3 || i === 17} />)}
          <span className="ml-[9px] mr-[9px] mt-[7px] h-[41px] w-px shrink-0 bg-[#555]" />
          {midIcons.map((ic, i) => <DockIcon key={i} icon={ic} dot />)}
          <span className="ml-[10px] mr-[9px] mt-[7px] h-[41px] w-px shrink-0 bg-[#555]" />
          {rightIcons.map((ic, i) => <DockIcon key={i} icon={ic} />)}
        </div>
      </div>
    </div>
  );
}

export default function App() {
  return (
    <div className="flex h-[900px] w-[1440px] flex-col overflow-hidden bg-black font-['Liberation_Sans',Arial,sans-serif]">
      <MenuBar />
      <div className="mt-px flex h-[813px] shrink-0 flex-col overflow-hidden rounded-[6px] border-t border-[#4b4c4e]">
        <TabStrip />
        <Toolbar />
        <div className="relative min-h-0 flex-1">
          <Dashboard />
          <EventModal />
        </div>
      </div>
      <Dock />
    </div>
  );
}
